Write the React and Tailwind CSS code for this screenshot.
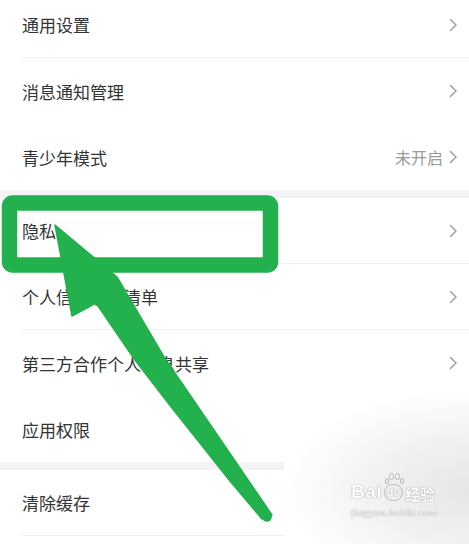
import React from "react";

const cjk = "font-['Noto_Sans_CJK_SC','Noto_Sans',sans-serif]";

const Chevron = () => (
  <svg width="9" height="14" viewBox="0 0 9 14" className="shrink-0">
    <path d="M1.5 1.5 7 7l-5.5 5.5" fill="none" stroke="#a3a3a3" strokeWidth="1.6" strokeLinecap="round" strokeLinejoin="round" />
  </svg>
);

const Row = ({ label, value, arrow = true, line = false }) => (
  <div className="flex h-[66px] pl-[22px]">
    <div className={"flex flex-1 items-center pr-[11px] " + (line ? "border-b border-[#f0f0f0]" : "")}>
      <span className="flex-1 text-[17px] leading-none text-[#333333]">{label}</span>
      {value && <span className="mr-[6px] text-[16px] leading-none text-[#9a9a9a]">{value}</span>}
      {arrow && <Chevron />}
    </div>
  </div>
);

const Band = () => <div className="h-[8px] bg-[#f3f3f5]" />;

// green box + arrow drawn on top of the list
const Markup = () => (
  <svg className="pointer-events-none absolute left-0 top-0" width="469" height="544" viewBox="0 0 469 544">
    <rect x="9.5" y="203" width="261" height="62" rx="3" fill="none" stroke="#22b14c" strokeWidth="15.5" />
    <polygon
      points="55,225 117,277 164,357 272,515 262,519 230,481 172,408 135,360 96,303 72,316"
      fill="#22b14c"
      stroke="#22b14c"
      strokeWidth="1.5"
      strokeLinejoin="round"
    />
    <circle cx="267" cy="517" r="4.8" fill="#22b14c" />
  </svg>
);

const Watermark = () => (
  <div className="pointer-events-none absolute bottom-0 left-[284px] right-0 top-[390px] bg-[radial-gradient(ellipse_at_100%_65%,#e6e6e6_0%,#f1f1f1_35%,#ffffff_72%)]">
    <div className="absolute left-[67px] top-[92px] flex flex-col items-start text-white [text-shadow:0_0_1px_#a0a0a0,0_0_1px_#a0a0a0]">
      <div className="flex items-end">
        <span className="font-['Liberation_Sans',sans-serif] text-[19px] font-bold leading-none tracking-[0.5px]">Bai</span>
        <span className="relative mx-[2px] flex h-[17px] w-[19px] items-center justify-center rounded-full border border-[#b8b8b8] font-['Liberation_Sans',sans-serif] text-[11px] font-bold leading-none">
          du
          <span className="absolute left-[0px] top-[-7px] h-[6px] w-[4px] rounded-full border border-[#b8b8b8]" />
          <span className="absolute left-[4px] top-[-12px] h-[7px] w-[5px] rounded-full border border-[#b8b8b8]" />
          <span className="absolute left-[10px] top-[-12px] h-[7px] w-[5px] rounded-full border border-[#b8b8b8]" />
          <span className="absolute left-[15px] top-[-7px] h-[6px] w-[4px] rounded-full border border-[#b8b8b8]" />
        </span>
        <span className={cjk + " text-[15px] font-bold leading-none"}>经验</span>
      </div>
      <span className="mt-[6px] font-['Liberation_Serif',serif] text-[11px] leading-none tracking-[0.3px]">jingyan.baidu.com</span>
    </div>
  </div>
);

export default function App() {
  return (
    <div className={"relative h-[544px] w-[469px] overflow-hidden bg-white " + cjk}>
      <div className="-mt-[8px] flex flex-col">
        <Row label="通用设置" line />
        <Row label="消息通知管理" />
        <Row label="青少年模式" value="未开启" />
        <Band />
        <Row label="隐私" line />
        <Row label="个人信息收集清单" line />
        <Row label="第三方合作个人信息共享" />
        <Row label="应用权限" arrow={false} />
        <Band />
        <Row label="清除缓存" arrow={false} line />
      </div>
      <Watermark />
      <Markup />
    </div>
  );
}
